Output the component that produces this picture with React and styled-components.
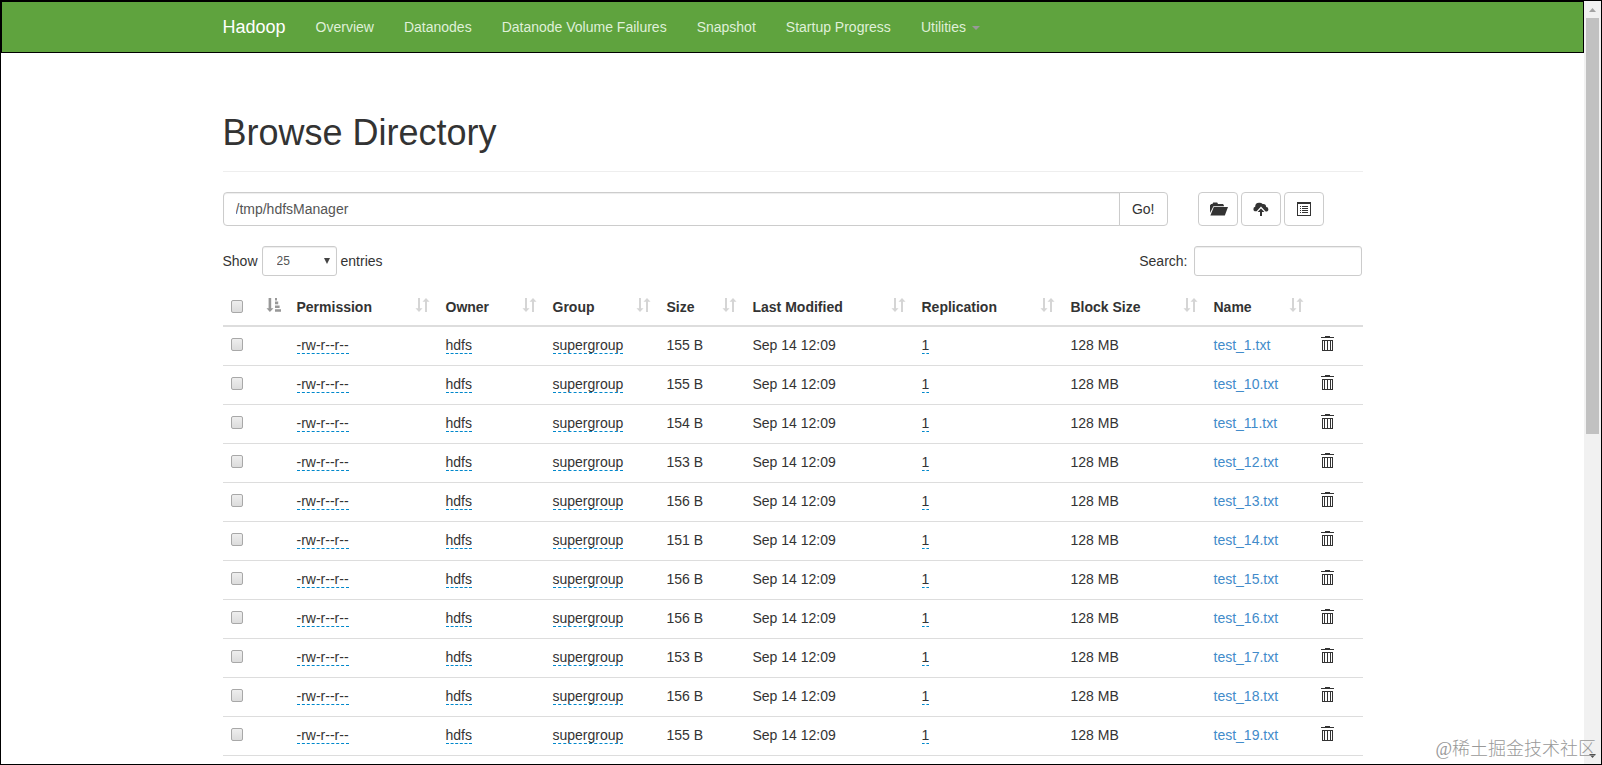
import { useState } from 'react';
import styled, { createGlobalStyle } from 'styled-components';

const navLinks = ['Overview', 'Datanodes', 'Datanode Volume Failures', 'Snapshot', 'Startup Progress'];

const columns = [
	{ name: 'Permission', width: 149 },
	{ name: 'Owner', width: 107 },
	{ name: 'Group', width: 114 },
	{ name: 'Size', width: 86 },
	{ name: 'Last Modified', width: 169 },
	{ name: 'Replication', width: 149 },
	{ name: 'Block Size', width: 143 },
	{ name: 'Name', width: 106 },
];

const files = [
	{ name: 'test_1.txt', size: 155 },
	{ name: 'test_10.txt', size: 155 },
	{ name: 'test_11.txt', size: 154 },
	{ name: 'test_12.txt', size: 153 },
	{ name: 'test_13.txt', size: 156 },
	{ name: 'test_14.txt', size: 151 },
	{ name: 'test_15.txt', size: 156 },
	{ name: 'test_16.txt', size: 156 },
	{ name: 'test_17.txt', size: 153 },
	{ name: 'test_18.txt', size: 156 },
	{ name: 'test_19.txt', size: 155 },
];

const FolderIcon = () => (
	<svg width="20" height="14" viewBox="0 0 20 14" fill="currentColor" aria-hidden="true">
		<path d="M2 11V3.2L3.2 2h1.2L5.2.5h4L10 2h5l.9 1.2v1H5.4z" />
		<path d="M5.8 5H20l-3.2 8.5H2.4z" />
	</svg>
);

const UploadIcon = () => (
	<svg width="16" height="14" viewBox="0 0 16 14" fill="currentColor" aria-hidden="true">
		<path d="M1.6 9.2A2.4 2.4 0 0 1 .4 7.2a2.4 2.4 0 0 1 1.8-2.4A4 4 0 0 1 6 .8a4.2 4.2 0 0 1 3.6 1.3 3.2 3.2 0 0 1 3.6 3 2.3 2.3 0 0 1 2.2 2.3 2.2 2.2 0 0 1-1.4 2.1h-1.4L8 4.6 3.6 9.2z" />
		<path d="M8 6.4L11.4 10H9v4H7v-4H4.6z" />
	</svg>
);

const ListIcon = () => (
	<svg width="14" height="14" viewBox="0 0 14 14" fill="currentColor" aria-hidden="true">
		<path fillRule="evenodd" d="M0 0h14v14H0zM1 2v11h12V2z" />
		<path d="M3 4h1v1H3zM5 4h6v1H5zM3 6h1v1H3zM5 6h6v1H5zM3 8h1v1H3zM5 8h6v1H5zM3 10h1v1H3zM5 10h6v1H5z" />
	</svg>
);

const TrashIcon = () => (
	<svg width="13" height="15" viewBox="0 0 13 15" fill="currentColor" aria-hidden="true">
		<path d="M4 0h5v1h4v1H0V1h4zM5 1h3V1z" />
		<path fillRule="evenodd" d="M1 4h11v11H1zM2 5v9h1V5zM4 5v9h2V5zM7 5v9h2V5zM10 5v9h1V5z" />
	</svg>
);

const SortBoth = () => (
	<svg width="14" height="14" viewBox="0 0 14 14" fill="currentColor" aria-hidden="true">
		<path d="M2 0h2v10.2h2.5L3 14-.5 10.2H2z" />
		<path d="M9 14h2V3.8h2.5L10 0 6.5 3.8H9z" />
	</svg>
);

const SortAsc = () => (
	<svg width="14" height="14" viewBox="0 0 14 14" fill="currentColor" aria-hidden="true">
		<path d="M1.6 0h2.6v10.2h2.3L2.9 14-.5 10.2h2.1z" />
		<path d="M8 0h2v2.4H8zM8 3.6h3.2v2.6H8zM8 7.4h4.6V10H8zM8 11.2h6v2.6H8z" />
	</svg>
);

export default function App() {
	const [path, setPath] = useState('/tmp/hdfsManager');
	const [search, setSearch] = useState('');
	const [selected, setSelected] = useState([]);

	const rows = files.filter(file => file.name.includes(search));
	const toggle = name =>
		setSelected(selected.includes(name) ? selected.filter(n => n !== name) : [...selected, name]);

	return (
		<Frame>
			<GlobalStyle />
			<Main>
				<NavBar>
					<NavInner>
						<Brand href="#">Hadoop</Brand>
						{navLinks.map(link => (
							<NavLink key={link} href="#">
								{link}
							</NavLink>
						))}
						<NavLink href="#">
							Utilities
							<Caret />
						</NavLink>
					</NavInner>
				</NavBar>
				<Container>
					<Title>Browse Directory</Title>
					<Row>
						<PathCol>
							<PathInput aria-label="Directory" value={path} onChange={e => setPath(e.target.value)} />
							<GoButton type="button">Go!</GoButton>
						</PathCol>
						<ButtonsCol>
							<IconButton type="button" aria-label="Create directory">
								<FolderIcon />
							</IconButton>
							<IconButton type="button" aria-label="Upload files">
								<UploadIcon />
							</IconButton>
							<IconButton type="button" aria-label="Cut and paste">
								<ListIcon />
							</IconButton>
						</ButtonsCol>
					</Row>
					<Toolbar>
						<Label>
							Show
							<SelectWrap>
								<Select defaultValue="25">
									<option>25</option>
									<option>50</option>
									<option>100</option>
								</Select>
								<svg width="6" height="6" viewBox="0 0 6 6" aria-hidden="true">
									<path d="M0 0h6L3 6z" fill="#444" />
								</svg>
							</SelectWrap>
							entries
						</Label>
						<Label>
							Search:
							<SearchInput type="search" value={search} onChange={e => setSearch(e.target.value)} />
						</Label>
					</Toolbar>
					<Table>
						<colgroup>
							<col width="66" />
							{columns.map(col => (
								<col key={col.name} width={col.width} />
							))}
							<col width="51" />
						</colgroup>
						<thead>
							<tr>
								<Th>
									<Checkbox
										type="checkbox"
										aria-label="Select all"
										checked={selected.length === files.length}
										onChange={e => setSelected(e.target.checked ? files.map(f => f.name) : [])}
									/>
									<SortMark $active>
										<SortAsc />
									</SortMark>
								</Th>
								{columns.map(col => (
									<Th key={col.name}>
										{col.name}
										<SortMark>
											<SortBoth />
										</SortMark>
									</Th>
								))}
								<Th />
							</tr>
						</thead>
						<tbody>
							{rows.map(file => (
								<tr key={file.name}>
									<Td>
										<Checkbox
											type="checkbox"
											aria-label={file.name}
											checked={selected.includes(file.name)}
											onChange={() => toggle(file.name)}
										/>
									</Td>
									<Td>
										<Editable>-rw-r--r--</Editable>
									</Td>
									<Td>
										<Editable>hdfs</Editable>
									</Td>
									<Td>
										<Editable>supergroup</Editable>
									</Td>
									<Td>{file.size} B</Td>
									<Td>Sep 14 12:09</Td>
									<Td>
										<Editable>1</Editable>
									</Td>
									<Td>128 MB</Td>
									<Td>
										<FileLink href="#">{file.name}</FileLink>
									</Td>
									<Td>
										<TrashButton type="button" aria-label={`Delete ${file.name}`}>
											<TrashIcon />
										</TrashButton>
									</Td>
								</tr>
							))}
						</tbody>
					</Table>
				</Container>
			</Main>
			<ScrollBar aria-hidden="true">
				<ScrollArrow>
					<svg width="7" height="4" viewBox="0 0 7 4">
						<path d="M3.5 0L7 4H0z" fill="#a3a3a3" />
					</svg>
				</ScrollArrow>
				<ScrollTrack>
					<ScrollThumb />
				</ScrollTrack>
				<ScrollArrow>
					<svg width="7" height="4" viewBox="0 0 7 4">
						<path d="M0 0h7L3.5 4z" fill="#505050" />
					</svg>
				</ScrollArrow>
			</ScrollBar>
			<Watermark>@稀土掘金技术社区</Watermark>
		</Frame>
	);
}

const GlobalStyle = createGlobalStyle`
	* {
		box-sizing: border-box;
	}
	body {
		margin: 0;
		background: #fff;
		color: #333;
		font-family: "Liberation Sans", Arial, sans-serif;
		font-size: 14px;
		line-height: 20px;
	}
	input, select, button {
		font-family: inherit;
		font-size: 14px;
	}
	a {
		text-decoration: none;
	}
`;

const Frame = styled.div`
	position: relative;
	display: flex;
	height: 100vh;
	border: 1px solid #000;
	overflow: hidden;
`;

const Main = styled.main`
	flex: 1;
	min-width: 0;
	overflow: hidden;
`;

const NavBar = styled.nav`
	background: #5fa33e;
	border: 1px solid #000;
`;

const NavInner = styled.div`
	display: flex;
	max-width: 1170px;
	margin: 0 auto;
`;

const Brand = styled.a`
	padding: 15px;
	color: #fff;
	font-size: 18px;
`;

const NavLink = styled.a`
	display: flex;
	align-items: center;
	padding: 15px;
	color: #dff0d8;
`;

const Caret = styled.span`
	margin: 2px 0 0 6px;
	border-top: 4px solid #999;
	border-left: 4px solid transparent;
	border-right: 4px solid transparent;
`;

const Container = styled.div`
	max-width: 1170px;
	margin: 0 auto;
	padding: 0 15px;
`;

const Title = styled.h1`
	margin: 60px 0 20px;
	padding-bottom: 18px;
	border-bottom: 1px solid #eee;
	font-size: 36px;
	font-weight: 500;
	line-height: 40px;
`;

const Row = styled.div`
	display: flex;
	margin: 0 -15px;
`;

const PathCol = styled.div`
	display: flex;
	width: calc(100% * 10 / 12);
	padding: 0 15px;
`;

const ButtonsCol = styled.div`
	display: flex;
	gap: 3px;
	padding: 0 15px;
`;

const PathInput = styled.input`
	flex: 1;
	min-width: 0;
	height: 34px;
	padding: 6px 12px;
	color: #555;
	border: 1px solid #ccc;
	border-radius: 4px 0 0 4px;
	box-shadow: inset 0 1px 1px rgba(0, 0, 0, 0.075);
`;

const GoButton = styled.button`
	margin-left: -1px;
	padding: 6px 12px;
	color: #333;
	background: #fff;
	border: 1px solid #ccc;
	border-radius: 0 4px 4px 0;
`;

const IconButton = styled.button`
	display: flex;
	align-items: center;
	justify-content: center;
	width: 40px;
	height: 34px;
	padding: 0;
	color: #333;
	background: #fff;
	border: 1px solid #ccc;
	border-radius: 4px;
`;

const Toolbar = styled.div`
	display: flex;
	justify-content: space-between;
	margin: 20px 0 13px;
	padding-right: 1px;
	line-height: 18px;
`;

const Label = styled.label`
	display: flex;
	align-items: center;
	gap: 4px;
`;

const SelectWrap = styled.span`
	position: relative;

	svg {
		position: absolute;
		top: 12px;
		right: 7px;
		pointer-events: none;
	}
`;

const Select = styled.select`
	display: block;
	appearance: none;
	width: 75px;
	height: 30px;
	padding: 5px 14px;
	color: #555;
	background: #fff;
	border: 1px solid #ccc;
	border-radius: 3px;
	font-size: 12px;
	box-shadow: inset 0 1px 1px rgba(0, 0, 0, 0.075);
`;

const SearchInput = styled.input`
	appearance: none;
	width: 168px;
	height: 30px;
	margin-left: 2px;
	padding: 5px 10px;
	border: 1px solid #ccc;
	border-radius: 3px;
	box-shadow: inset 0 1px 1px rgba(0, 0, 0, 0.075);
`;

const Table = styled.table`
	width: 100%;
	table-layout: fixed;
	border-spacing: 0;
`;

const Th = styled.th`
	position: relative;
	height: 38px;
	padding: 8px;
	border-bottom: 2px solid #ddd;
	text-align: left;
	vertical-align: top;
`;

const SortMark = styled.span`
	position: absolute;
	right: 8px;
	bottom: 13px;
	display: flex;
	opacity: ${props => (props.$active ? 0.5 : 0.2)};

	svg {
		overflow: visible;
	}
`;

const Td = styled.td`
	height: 39px;
	padding: 8px;
	border-bottom: 1px solid #ddd;
	vertical-align: top;
`;

const Checkbox = styled.input`
	appearance: none;
	display: block;
	width: 12px;
	height: 13px;
	margin: 3px 0 0;
	background: linear-gradient(#eee, #dcdcdc);
	border: 1px solid #a8a8a8;
	border-radius: 2px;

	&:checked {
		background: #666;
	}
`;

const Editable = styled.span`
	border-bottom: 1px dashed #08c;
`;

const FileLink = styled.a`
	color: #428bca;
`;

const TrashButton = styled.button`
	display: block;
	padding: 1px;
	color: #333;
	background: none;
	border: 0;

	svg {
		display: block;
	}
`;

const ScrollBar = styled.div`
	display: flex;
	flex-direction: column;
	width: 17px;
	background: #f1f1f1;
`;

const ScrollArrow = styled.div`
	display: flex;
	align-items: center;
	justify-content: center;
	height: 17px;
`;

const ScrollTrack = styled.div`
	flex: 1;
	padding: 0 2px;
`;

const ScrollThumb = styled.div`
	height: 57%;
	background: #c1c1c1;
`;

const Watermark = styled.div`
	position: absolute;
	right: 5px;
	bottom: 5px;
	color: #999;
	font-family: "Liberation Serif", "Noto Sans CJK SC", serif;
	font-size: 18px;
	font-weight: 300;
	pointer-events: none;
`;
